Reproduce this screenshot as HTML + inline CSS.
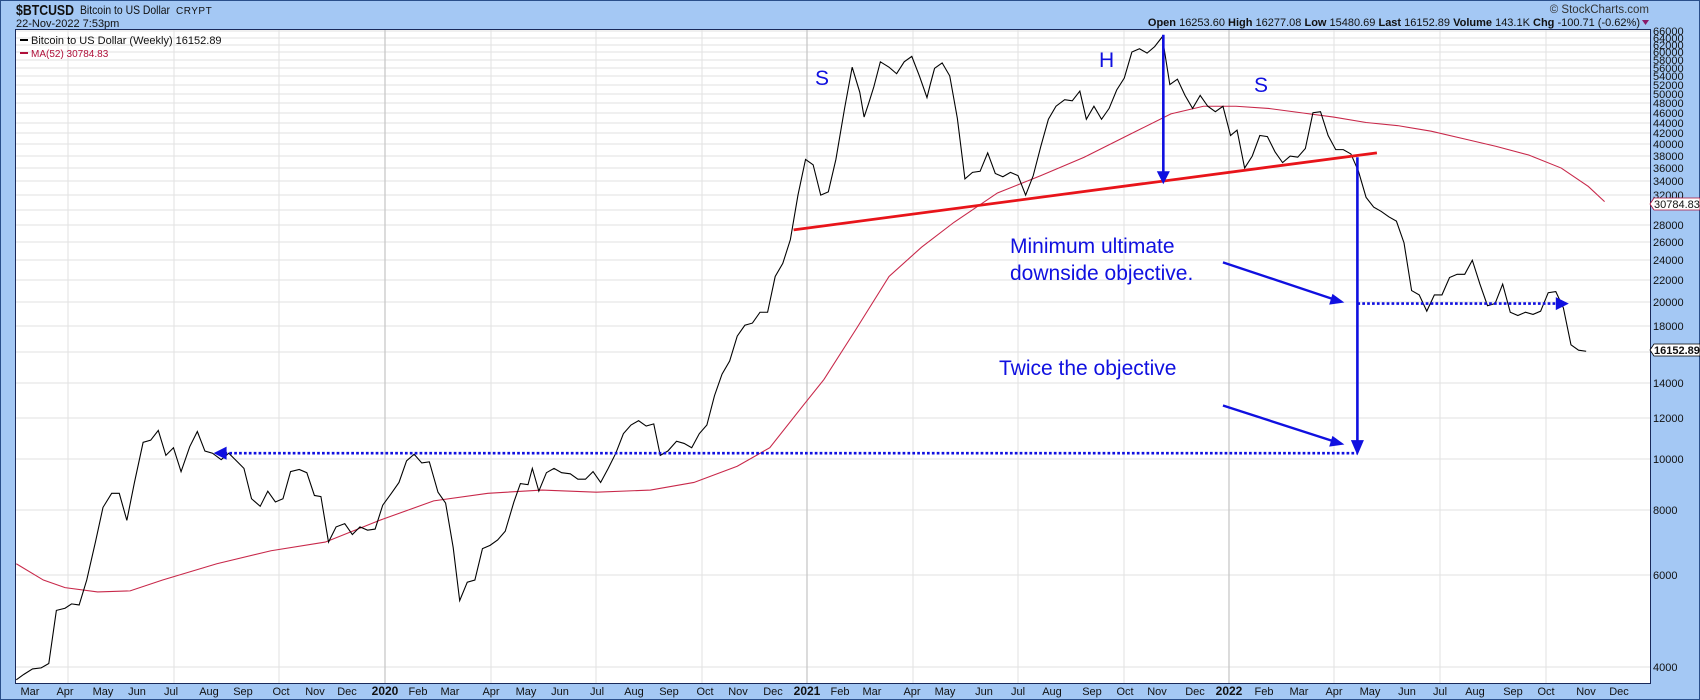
<!DOCTYPE html>
<html><head><meta charset="utf-8"><style>
html,body{margin:0;padding:0;width:1700px;height:700px;overflow:hidden;background:#a4c8f4;}
svg{display:block;font-family:"Liberation Sans",Arial,sans-serif;}
</style></head><body>
<svg width="1700" height="700" viewBox="0 0 1700 700" xmlns="http://www.w3.org/2000/svg">
<rect x="0" y="0" width="1700" height="700" fill="#a4c8f4"/>
<rect x="0.5" y="0.5" width="1699" height="699" fill="none" stroke="#2a4f8a" stroke-width="1"/>
<text x="16" y="15" font-size="15" font-weight="bold" fill="#111" textLength="58" lengthAdjust="spacingAndGlyphs">$BTCUSD</text>
<text x="80" y="14" font-size="12" fill="#111" textLength="90" lengthAdjust="spacingAndGlyphs">Bitcoin to US Dollar</text>
<text x="176" y="14" font-size="10" fill="#111" letter-spacing="0.5">CRYPT</text>
<text x="16" y="27" font-size="11" fill="#111">22-Nov-2022 7:53pm</text>
<text x="1649" y="13" font-size="11.5" fill="#333" text-anchor="end">© StockCharts.com</text>
<text x="1640" y="26" font-size="11" fill="#111" text-anchor="end"><tspan font-weight="bold">Open</tspan> 16253.60 <tspan font-weight="bold">High</tspan> 16277.08 <tspan font-weight="bold">Low</tspan> 15480.69 <tspan font-weight="bold">Last</tspan> 16152.89 <tspan font-weight="bold">Volume</tspan> 143.1K <tspan font-weight="bold">Chg</tspan> -100.71 (-0.62%)</text>
<path d="M1642 20 L1649 20 L1645.5 25 Z" fill="#8a1a6a"/>
<rect x="15.5" y="29.5" width="1635" height="654" fill="#fff" stroke="#1a2a5a" stroke-width="1"/>
<g stroke="#e2e2e2" stroke-width="1">
<line x1="16" x2="1650" y1="31" y2="31"/><line x1="16" x2="1650" y1="38" y2="38"/><line x1="16" x2="1650" y1="45" y2="45"/><line x1="16" x2="1650" y1="52" y2="52"/><line x1="16" x2="1650" y1="60" y2="60"/><line x1="16" x2="1650" y1="68" y2="68"/><line x1="16" x2="1650" y1="76" y2="76"/><line x1="16" x2="1650" y1="85" y2="85"/><line x1="16" x2="1650" y1="94" y2="94"/><line x1="16" x2="1650" y1="103" y2="103"/><line x1="16" x2="1650" y1="113" y2="113"/><line x1="16" x2="1650" y1="123" y2="123"/><line x1="16" x2="1650" y1="133" y2="133"/><line x1="16" x2="1650" y1="144" y2="144"/><line x1="16" x2="1650" y1="156" y2="156"/><line x1="16" x2="1650" y1="168" y2="168"/><line x1="16" x2="1650" y1="181" y2="181"/><line x1="16" x2="1650" y1="195" y2="195"/><line x1="16" x2="1650" y1="210" y2="210"/><line x1="16" x2="1650" y1="225" y2="225"/><line x1="16" x2="1650" y1="242" y2="242"/><line x1="16" x2="1650" y1="260" y2="260"/><line x1="16" x2="1650" y1="280" y2="280"/><line x1="16" x2="1650" y1="302" y2="302"/><line x1="16" x2="1650" y1="326" y2="326"/><line x1="16" x2="1650" y1="352" y2="352"/><line x1="16" x2="1650" y1="383" y2="383"/><line x1="16" x2="1650" y1="418" y2="418"/><line x1="16" x2="1650" y1="459" y2="459"/><line x1="16" x2="1650" y1="510" y2="510"/><line x1="16" x2="1650" y1="575" y2="575"/><line x1="16" x2="1650" y1="667" y2="667"/>
<line x1="68" x2="68" y1="30" y2="683"/><line x1="174" x2="174" y1="30" y2="683"/><line x1="279" x2="279" y1="30" y2="683"/><line x1="491" x2="491" y1="30" y2="683"/><line x1="596" x2="596" y1="30" y2="683"/><line x1="702" x2="702" y1="30" y2="683"/><line x1="913" x2="913" y1="30" y2="683"/><line x1="1018" x2="1018" y1="30" y2="683"/><line x1="1124" x2="1124" y1="30" y2="683"/><line x1="1334" x2="1334" y1="30" y2="683"/><line x1="1440" x2="1440" y1="30" y2="683"/><line x1="1546" x2="1546" y1="30" y2="683"/>
</g>
<g stroke="#c8c8c8" stroke-width="1.3"><line x1="385" x2="385" y1="30" y2="683"/><line x1="807" x2="807" y1="30" y2="683"/><line x1="1229" x2="1229" y1="30" y2="683"/></g>
<line x1="20" x2="28" y1="40" y2="40" stroke="#000" stroke-width="2"/>
<text x="31" y="44" font-size="11" fill="#111">Bitcoin to US Dollar (Weekly) 16152.89</text>
<line x1="20" x2="28" y1="53" y2="53" stroke="#b0103a" stroke-width="2"/>
<text x="31" y="57" font-size="10" fill="#b0103a">MA(52) 30784.83</text>
<g transform="scale(1.08418)" fill="none">
<polyline stroke="#c8284a" stroke-width="1" points="15,520 40,535 60,542 90,546 120,545 150,535 200,520 250,508 300,500 350,480 400,462 450,455 500,452 550,454 600,452 640,445 680,430 710,413 740,375 760,350 790,303 820,255 850,228 880,205 920,178 960,162 1000,145 1040,125 1080,105 1110,98 1140,98 1170,100 1200,104 1230,108 1260,113 1290,116 1320,121 1350,128 1380,135 1410,143 1440,155 1465,172 1480,186"/>
<polyline stroke="#000" stroke-width="1" points="15,627 22,622 30,617 38,616 45,612 52,563 60,561 66,557 73,558 80,535 88,500 95,468 103,455 110,455 117,480 124,445 132,408 139,406 146,397 153,420 160,413 167,435 175,412 182,398 189,416 196,418 204,424 211,418 218,425 225,432 232,460 240,467 247,453 254,463 261,460 268,435 276,433 283,436 290,457 296,458 303,500 310,486 318,483 325,493 332,486 339,489 346,488 353,466 361,455 368,445 375,425 382,419 389,427 396,426 404,454 411,464 418,505 424,554 431,537 438,535 445,506 452,503 459,498 466,490 474,463 480,446 487,447 491,432 497,453 504,436 511,432 518,436 526,437 533,442 540,442 547,435 554,445 561,432 568,418 575,400 582,392 589,388 596,393 603,391 609,420 616,416 624,407 631,409 638,413 645,400 652,392 659,365 666,345 673,333 680,310 687,300 694,298 701,288 708,288 715,255 722,243 729,221 736,180 743,147 750,152 757,180 764,177 771,147 779,100 786,62 793,85 797,108 801,96 806,80 812,57 820,62 827,68 834,57 841,52 848,70 855,90 858,78 862,63 869,58 876,70 883,109 890,165 897,159 904,158 911,141 918,160 925,163 932,159 939,162 946,180 953,162 960,135 967,110 974,98 982,92 989,93 996,84 1002,110 1009,98 1016,110 1023,100 1030,83 1037,72 1044,48 1051,45 1058,49 1065,43 1072,34 1079,78 1086,73 1093,88 1100,100 1107,88 1114,98 1121,103 1128,98 1135,125 1141,120 1148,155 1155,144 1162,125 1169,126 1176,140 1183,150 1190,144 1197,145 1204,137 1211,104 1218,103 1225,125 1232,138 1239,138 1246,142 1253,158 1260,182 1267,191 1274,195 1281,200 1288,204 1295,224 1302,268 1309,272 1316,287 1323,272 1330,272 1337,256 1344,253 1351,253 1358,240 1365,262 1372,282 1379,280 1386,262 1393,288 1400,291 1407,288 1414,290 1421,287 1428,270 1435,269 1442,284 1449,318 1456,323 1463,324"/>
<line x1="732" y1="212" x2="1270" y2="141" stroke="#e8141a" stroke-width="2.6"/>
<g stroke="#1010e0" stroke-width="2.4">
<line x1="1073" y1="32" x2="1073" y2="160"/>
<line x1="1252" y1="145" x2="1252" y2="408"/>
<line x1="207" y1="418" x2="1252" y2="418" stroke-dasharray="2.5,2"/>
<line x1="1252" y1="280" x2="1437" y2="280" stroke-dasharray="2.5,2"/>
<line x1="1128" y1="242" x2="1230" y2="276" stroke-width="2.2"/>
<line x1="1128" y1="374" x2="1230" y2="407" stroke-width="2.2"/>
</g>
<g fill="#1010e0">
<path d="M1067 158 L1079 158 L1073 170 Z"/>
<path d="M1246 406 L1258 406 L1252 420 Z"/>
<path d="M197 418 L209 412 L209 424 Z"/>
<path d="M1447 280 L1435 274 L1435 286 Z"/>
<path d="M1240 279 L1226 281 L1229 271 Z"/>
<path d="M1240 410 L1226 412 L1229 402 Z"/>
</g>
</g>
<g font-size="21" fill="#1010e0">
<text x="815" y="85">S</text>
<text x="1099" y="67">H</text>
<text x="1254" y="92">S</text>
<text x="1010" y="253">Minimum ultimate</text>
<text x="1010" y="280">downside objective.</text>
<text x="999" y="375">Twice the objective</text>
</g>
<g font-size="11" fill="#111">
<text x="1653" y="35">66000</text><text x="1653" y="42">64000</text><text x="1653" y="49">62000</text><text x="1653" y="56">60000</text><text x="1653" y="64">58000</text><text x="1653" y="72">56000</text><text x="1653" y="80">54000</text><text x="1653" y="89">52000</text><text x="1653" y="98">50000</text><text x="1653" y="107">48000</text><text x="1653" y="117">46000</text><text x="1653" y="127">44000</text><text x="1653" y="137">42000</text><text x="1653" y="148">40000</text><text x="1653" y="160">38000</text><text x="1653" y="172">36000</text><text x="1653" y="185">34000</text><text x="1653" y="199">32000</text><text x="1653" y="229">28000</text><text x="1653" y="246">26000</text><text x="1653" y="264">24000</text><text x="1653" y="284">22000</text><text x="1653" y="306">20000</text><text x="1653" y="330">18000</text><text x="1653" y="387">14000</text><text x="1653" y="422">12000</text><text x="1653" y="463">10000</text><text x="1653" y="514">8000</text><text x="1653" y="579">6000</text><text x="1653" y="671">4000</text>
</g>
<path d="M1654 198 L1700 198 L1700 210 L1654 210 L1650 204 Z" fill="#fff" stroke="#b0103a" stroke-width="0.8"/>
<text x="1654" y="208" font-size="11" fill="#111">30784.83</text>
<path d="M1654 344 L1700 344 L1700 356 L1654 356 L1650 350 Z" fill="#fff" stroke="#000" stroke-width="0.8"/>
<text x="1654" y="354" font-size="11" font-weight="bold" fill="#111">16152.89</text>
<g font-size="11" fill="#111" text-anchor="middle">
<text x="30" y="695">Mar</text><text x="65" y="695">Apr</text><text x="103" y="695">May</text><text x="137" y="695">Jun</text><text x="171" y="695">Jul</text><text x="209" y="695">Aug</text><text x="243" y="695">Sep</text><text x="281" y="695">Oct</text><text x="315" y="695">Nov</text><text x="347" y="695">Dec</text><text x="385" y="695" font-weight="bold" font-size="12">2020</text><text x="418" y="695">Feb</text><text x="450" y="695">Mar</text><text x="491" y="695">Apr</text><text x="526" y="695">May</text><text x="560" y="695">Jun</text><text x="597" y="695">Jul</text><text x="634" y="695">Aug</text><text x="669" y="695">Sep</text><text x="705" y="695">Oct</text><text x="738" y="695">Nov</text><text x="773" y="695">Dec</text><text x="807" y="695" font-weight="bold" font-size="12">2021</text><text x="840" y="695">Feb</text><text x="872" y="695">Mar</text><text x="912" y="695">Apr</text><text x="945" y="695">May</text><text x="984" y="695">Jun</text><text x="1018" y="695">Jul</text><text x="1052" y="695">Aug</text><text x="1092" y="695">Sep</text><text x="1125" y="695">Oct</text><text x="1157" y="695">Nov</text><text x="1195" y="695">Dec</text><text x="1229" y="695" font-weight="bold" font-size="12">2022</text><text x="1264" y="695">Feb</text><text x="1299" y="695">Mar</text><text x="1334" y="695">Apr</text><text x="1370" y="695">May</text><text x="1407" y="695">Jun</text><text x="1440" y="695">Jul</text><text x="1475" y="695">Aug</text><text x="1513" y="695">Sep</text><text x="1546" y="695">Oct</text><text x="1586" y="695">Nov</text><text x="1619" y="695">Dec</text>
</g>
</svg>
</body></html>
